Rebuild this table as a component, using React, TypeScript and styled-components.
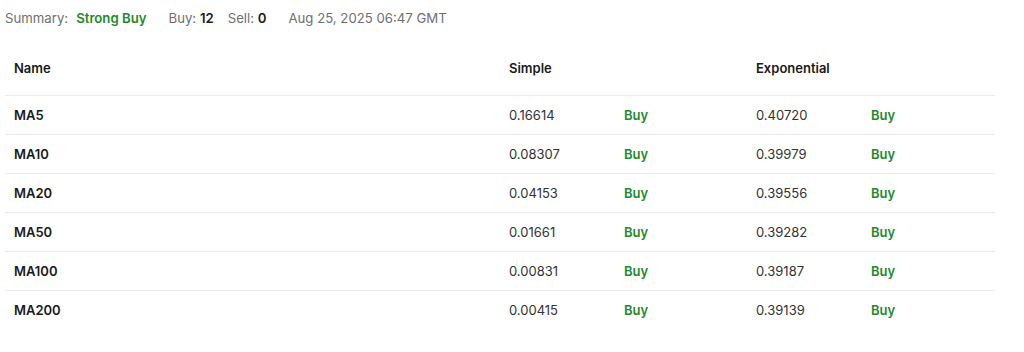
import React from "react";
import styled, { createGlobalStyle } from "styled-components";

const Global = createGlobalStyle`
  html, body { margin: 0; padding: 0; background: #fff; }
  body { font-family: Inter, "Noto Sans", sans-serif; font-size: 13px; color: #1a1a1a; }
`;

const Page = styled.div`
  padding: 0 29px 0 5px;
`;

const Summary = styled.div`
  display: flex;
  align-items: center;
  height: 35px;
  color: #6f6f6f;
  font-size: 13.2px;
`;

const Group = styled.span<{ $gap?: number }>`
  margin-right: ${(p) => p.$gap ?? 0}px;
`;

const Strong = styled.b<{ $green?: boolean }>`
  font-weight: 600;
  color: ${(p) => (p.$green ? "#1f8a2c" : "#1a1a1a")};
`;

const Table = styled.div`
  display: grid;
  grid-template-columns: 495px 115px 132px 115px 133px;
`;

const Row = styled.div<{ $head?: boolean; $last?: boolean }>`
  display: contents;
  & > div {
    height: ${(p) => (p.$head ? 54 : 38)}px;
    padding-top: ${(p) => (p.$head ? 6 : 0)}px;
    border-bottom: ${(p) => (p.$last ? "none" : "1px solid #ebebeb")};
  }
`;

const Cell = styled.div<{ $bold?: boolean; $green?: boolean; $span?: number }>`
  display: flex;
  align-items: center;
  padding-left: 9px;
  grid-column: span ${(p) => p.$span ?? 1};
  font-weight: ${(p) => (p.$bold ? 600 : 400)};
  color: ${(p) => (p.$green ? "#1f8a2c" : p.$bold ? "#1a1a1a" : "#333")};
`;

const rows = [
  ["MA5", "0.16614", "0.40720"],
  ["MA10", "0.08307", "0.39979"],
  ["MA20", "0.04153", "0.39556"],
  ["MA50", "0.01661", "0.39282"],
  ["MA100", "0.00831", "0.39187"],
  ["MA200", "0.00415", "0.39139"],
];

export default function App() {
  return (
    <Page>
      <Global />
      <Summary>
        <Group $gap={8}>Summary:</Group>
        <Group $gap={22}>
          <Strong $green>Strong Buy</Strong>
        </Group>
        <Group $gap={14}>
          Buy: <Strong>12</Strong>
        </Group>
        <Group $gap={22}>
          Sell: <Strong>0</Strong>
        </Group>
        <Group>Aug 25, 2025 06:47 GMT</Group>
      </Summary>
      <Table>
        <Row $head>
          <Cell $bold>Name</Cell>
          <Cell $bold $span={2}>Simple</Cell>
          <Cell $bold $span={2}>Exponential</Cell>
        </Row>
        {rows.map(([n, s, e], i) => (
          <Row key={n} $last={i === rows.length - 1}>
            <Cell $bold>{n}</Cell>
            <Cell>{s}</Cell>
            <Cell $bold $green>Buy</Cell>
            <Cell>{e}</Cell>
            <Cell $bold $green>Buy</Cell>
          </Row>
        ))}
      </Table>
    </Page>
  );
}
